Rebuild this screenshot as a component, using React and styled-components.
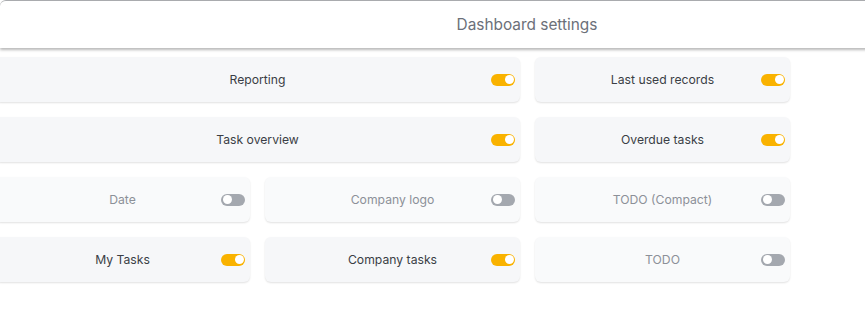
import styled, { createGlobalStyle } from "styled-components";

const GlobalStyle = createGlobalStyle`
  html, body {
    margin: 0;
    padding: 0;
    background: #fff;
    overflow: hidden;
  }
  body {
    font-family: Inter, "Noto Sans", sans-serif;
  }
`;

const widgets = [
  { name: "Reporting", on: true, span: 2 },
  { name: "Last used records", on: true },
  { name: "Task overview", on: true, span: 2 },
  { name: "Overdue tasks", on: true },
  { name: "Date", on: false },
  { name: "Company logo", on: false },
  { name: "TODO (Compact)", on: false },
  { name: "My Tasks", on: true },
  { name: "Company tasks", on: true },
  { name: "TODO", on: false },
];

const Page = styled.div`
  width: 865px;
  height: 326px;
  overflow: hidden;
  display: flex;
  flex-direction: column;
  gap: 9px;
`;

const Header = styled.header`
  flex-shrink: 0;
  width: 1054px;
  height: 47px;
  background: #fff;
  border-top: 1px solid #a9abae;
  border-radius: 6px 6px 0 0;
  box-shadow: 0 2px 3px rgba(0, 0, 0, 0.28);
  display: flex;
  align-items: center;
  justify-content: center;
`;

const Title = styled.h1`
  margin: 0;
  font-size: 15.4px;
  font-weight: 400;
  color: #6b7079;
`;

const Grid = styled.div`
  margin-left: -5px;
  display: grid;
  grid-template-columns: repeat(3, 255px);
  grid-auto-rows: 45px;
  gap: 15px;
`;

const Card = styled.div`
  position: relative;
  grid-column: span ${(p) => p.$span || 1};
  display: flex;
  align-items: center;
  justify-content: center;
  border-radius: 6px;
  background: ${(p) => (p.$on ? "#f6f7f9" : "#f9fafb")};
  box-shadow: 0 1px 2px rgba(0, 0, 0, 0.12);
  font-size: 12.2px;
  color: ${(p) => (p.$on ? "#3a3e45" : "#8c9098")};
`;

const Toggle = styled.span`
  position: absolute;
  right: 5px;
  top: 50%;
  margin-top: -6px;
  width: 24px;
  height: 12px;
  border-radius: 6px;
  background: ${(p) => (p.$on ? "#f9b200" : "#a4a8af")};

  &::after {
    content: "";
    position: absolute;
    top: 1.5px;
    ${(p) => (p.$on ? "right: 1.5px;" : "left: 1.5px;")}
    width: 9px;
    height: 9px;
    border-radius: 50%;
    background: #fff;
  }
`;

export default function App() {
  return (
    <>
      <GlobalStyle />
      <Page>
        <Header>
          <Title>Dashboard settings</Title>
        </Header>
        <Grid>
          {widgets.map((w) => (
            <Card key={w.name} $span={w.span} $on={w.on}>
              {w.name}
              <Toggle $on={w.on} />
            </Card>
          ))}
        </Grid>
      </Page>
    </>
  );
}
